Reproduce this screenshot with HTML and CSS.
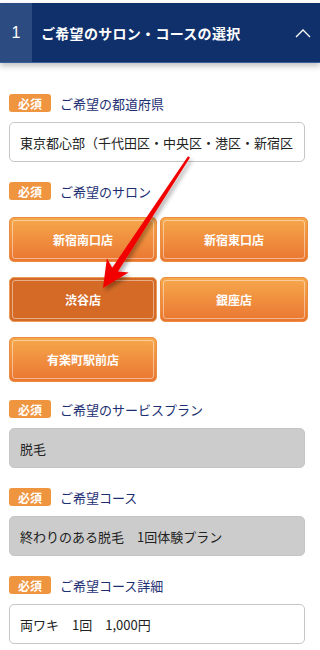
FILE: index.html
```html
<!DOCTYPE html>
<html lang="ja">

<head>
  <meta charset="UTF-8">
  <meta name="viewport" content="width=device-width, initial-scale=1.0">
  <title>ご希望のサロン・コースの選択</title>
  <link rel="stylesheet" href="styles.css">
</head>

<body>
  <div class="page">
    <div class="step-head">
      <div class="step-num">1</div>
      <div class="step-title">ご希望のサロン・コースの選択</div>
      <svg class="step-toggle" width="16" height="10" viewBox="0 0 16 10">
        <polyline points="1,9 8,2 15,9" fill="none" stroke="#fff" stroke-width="1.3"/>
      </svg>
    </div>

    <div class="form">
      <div class="field">
        <div class="label"><span class="req">必須</span>ご希望の都道府県</div>
        <div class="box">東京都心部（千代田区・中央区・港区・新宿区</div>
      </div>

      <div class="field field-salon">
        <div class="label"><span class="req">必須</span>ご希望のサロン</div>
        <div class="salon-list">
          <div class="salon">新宿南口店</div>
          <div class="salon">新宿東口店</div>
          <div class="salon on">渋谷店</div>
          <div class="salon">銀座店</div>
          <div class="salon">有楽町駅前店</div>
        </div>
      </div>

      <div class="field">
        <div class="label"><span class="req">必須</span>ご希望のサービスプラン</div>
        <div class="box disabled">脱毛</div>
      </div>

      <div class="field">
        <div class="label"><span class="req">必須</span>ご希望コース</div>
        <div class="box disabled">終わりのある脱毛　1回体験プラン</div>
      </div>

      <div class="field">
        <div class="label"><span class="req">必須</span>ご希望コース詳細</div>
        <div class="box">両ワキ　1回　1,000円</div>
      </div>
    </div>

    <!-- 注釈の矢印 -->
    <svg class="note-arrow" width="320" height="650" viewBox="0 0 320 650">
      <defs>
        <filter id="shadow" x="-20%" y="-20%" width="140%" height="140%">
          <feDropShadow dx="2" dy="3" stdDeviation="2" flood-color="#000" flood-opacity="0.35"/>
        </filter>
      </defs>
      <polygon filter="url(#shadow)" fill="#f20000"
        points="190,157.5 118,271.5 128.7,272.5 103,288 106.9,258.3 112.2,267.7 188,156.3"/>
    </svg>
  </div>
</body>

</html>
```

FILE: styles.css
```css
* {
  margin: 0;
  padding: 0;
  box-sizing: border-box;
}

body {
  background-color: #fff;
  font-family: "Noto Sans CJK JP", "Liberation Sans", sans-serif;
  color: #222;
}

.page {
  position: relative;
  width: 320px;
  height: 650px;
  overflow: hidden;
}

/* ヘッダー */
.step-head {
  display: flex;
  align-items: center;
  height: 60px;
  margin-top: 3px;
  background-color: #10306b;
  border-bottom: 1px solid #3a5f9c;
  box-shadow: 0 3px 6px rgba(0, 0, 0, 0.25);
  color: #fff;
}

.step-num {
  width: 32px;
  height: 100%;
  display: flex;
  align-items: center;
  justify-content: center;
  background-color: #2c4b80;
  font-size: 16px;
  font-family: "Liberation Sans", sans-serif;
}

.step-title {
  flex: 1;
  padding-left: 9px;
  font-size: 14px;
  font-weight: bold;
  letter-spacing: 0.3px;
}

.step-toggle {
  margin-right: 9px;
}

/* フォーム */
.form {
  padding: 31px 15px 0 9px;
}

.field {
  margin-bottom: 20px;
}

.label {
  display: flex;
  align-items: center;
  height: 18px;
  margin-bottom: 10px;
  font-size: 13px;
  color: #1d2f72;
}

.req {
  display: inline-flex;
  align-items: center;
  justify-content: center;
  width: 42px;
  height: 18px;
  margin-right: 9px;
  border-radius: 3px;
  background-color: #f0953f;
  color: #fff;
  font-size: 12px;
  font-weight: bold;
}

.box {
  height: 40px;
  padding: 0 10px;
  display: flex;
  align-items: center;
  border: 1px solid #c6c6c6;
  border-radius: 5px;
  font-size: 13px;
  white-space: nowrap;
  overflow: hidden;
}

.box.disabled {
  background-color: #cccccc;
}

/* サロン選択 */
.field-salon {
  margin-bottom: 18px;
}

.field-salon .label {
  margin-bottom: 17px;
}

.salon-list {
  display: grid;
  grid-template-columns: 148px 148px;
  column-gap: 3px;
  row-gap: 15px;
}

.salon {
  position: relative;
  height: 45px;
  display: flex;
  align-items: center;
  justify-content: center;
  border: 1px solid #ec8c3e;
  border-radius: 5px;
  background: linear-gradient(#f6a84c, #ea7631);
  color: #fff;
  font-size: 12px;
  font-weight: bold;
  cursor: pointer;
}

.salon::before {
  content: "";
  position: absolute;
  top: 2px;
  left: 2px;
  right: 2px;
  bottom: 2px;
  border: 1px solid rgba(255, 255, 255, 0.45);
  border-radius: 3px;
}

.salon.on {
  background: #d46a26;
  border-color: #eb9a5a;
}

.note-arrow {
  position: absolute;
  top: 0;
  left: 0;
  pointer-events: none;
}
```
